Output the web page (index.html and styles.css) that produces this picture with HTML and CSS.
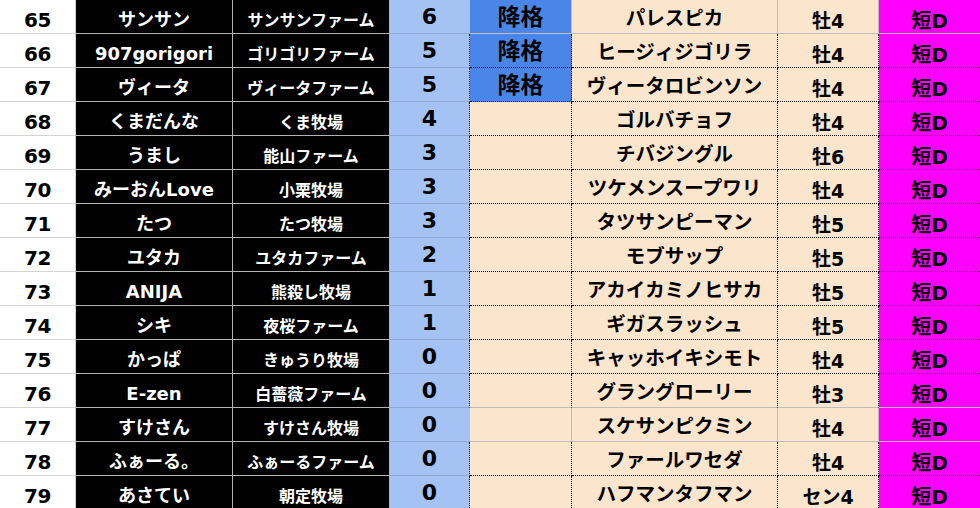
FILE: index.html
```html
<!DOCTYPE html>
<html lang="ja">
<head>
<meta charset="utf-8">
<link rel="stylesheet" href="styles.css">
</head>
<body>
<div class="sheet">
  <div class="row solid"><div class="cell c1">65</div><div class="cell c2">サンサン</div><div class="cell c3">サンサンファーム</div><div class="cell c4">6</div><div class="cell c5 demote">降格</div><div class="cell c6">パレスピカ</div><div class="cell c7">牡4</div><div class="cell c8">短D</div></div>
  <div class="row dot"><div class="cell c1">66</div><div class="cell c2">907gorigori</div><div class="cell c3">ゴリゴリファーム</div><div class="cell c4">5</div><div class="cell c5 demote">降格</div><div class="cell c6">ヒージィジゴリラ</div><div class="cell c7">牡4</div><div class="cell c8">短D</div></div>
  <div class="row dot"><div class="cell c1">67</div><div class="cell c2">ヴィータ</div><div class="cell c3">ヴィータファーム</div><div class="cell c4">5</div><div class="cell c5 demote">降格</div><div class="cell c6">ヴィータロビンソン</div><div class="cell c7">牡4</div><div class="cell c8">短D</div></div>
  <div class="row dot"><div class="cell c1">68</div><div class="cell c2">くまだんな</div><div class="cell c3">くま牧場</div><div class="cell c4">4</div><div class="cell c5"></div><div class="cell c6">ゴルバチョフ</div><div class="cell c7">牡4</div><div class="cell c8">短D</div></div>
  <div class="row dot"><div class="cell c1">69</div><div class="cell c2">うまし</div><div class="cell c3">能山ファーム</div><div class="cell c4">3</div><div class="cell c5"></div><div class="cell c6">チバジングル</div><div class="cell c7">牡6</div><div class="cell c8">短D</div></div>
  <div class="row dot"><div class="cell c1">70</div><div class="cell c2">みーおんLove</div><div class="cell c3">小栗牧場</div><div class="cell c4">3</div><div class="cell c5"></div><div class="cell c6">ツケメンスープワリ</div><div class="cell c7">牡4</div><div class="cell c8">短D</div></div>
  <div class="row dot"><div class="cell c1">71</div><div class="cell c2">たつ</div><div class="cell c3">たつ牧場</div><div class="cell c4">3</div><div class="cell c5"></div><div class="cell c6">タツサンピーマン</div><div class="cell c7">牡5</div><div class="cell c8">短D</div></div>
  <div class="row dot"><div class="cell c1">72</div><div class="cell c2">ユタカ</div><div class="cell c3">ユタカファーム</div><div class="cell c4">2</div><div class="cell c5"></div><div class="cell c6">モブサップ</div><div class="cell c7">牡5</div><div class="cell c8">短D</div></div>
  <div class="row dot"><div class="cell c1">73</div><div class="cell c2">ANIJA</div><div class="cell c3">熊殺し牧場</div><div class="cell c4">1</div><div class="cell c5"></div><div class="cell c6">アカイカミノヒサカ</div><div class="cell c7">牡5</div><div class="cell c8">短D</div></div>
  <div class="row dot"><div class="cell c1">74</div><div class="cell c2">シキ</div><div class="cell c3">夜桜ファーム</div><div class="cell c4">1</div><div class="cell c5"></div><div class="cell c6">ギガスラッシュ</div><div class="cell c7">牡5</div><div class="cell c8">短D</div></div>
  <div class="row dot"><div class="cell c1">75</div><div class="cell c2">かっぱ</div><div class="cell c3">きゅうり牧場</div><div class="cell c4">0</div><div class="cell c5"></div><div class="cell c6">キャッホイキシモト</div><div class="cell c7">牡4</div><div class="cell c8">短D</div></div>
  <div class="row dot last"><div class="cell c1">76</div><div class="cell c2">E-zen</div><div class="cell c3">白薔薇ファーム</div><div class="cell c4">0</div><div class="cell c5"></div><div class="cell c6">グラングローリー</div><div class="cell c7">牡3</div><div class="cell c8">短D</div></div>
  <div class="row solid"><div class="cell c1">77</div><div class="cell c2">すけさん</div><div class="cell c3">すけさん牧場</div><div class="cell c4">0</div><div class="cell c5"></div><div class="cell c6">スケサンピクミン</div><div class="cell c7">牡4</div><div class="cell c8">短D</div></div>
  <div class="row dot"><div class="cell c1">78</div><div class="cell c2">ふぁーる。</div><div class="cell c3">ふぁーるファーム</div><div class="cell c4">0</div><div class="cell c5"></div><div class="cell c6">ファールワセダ</div><div class="cell c7">牡4</div><div class="cell c8">短D</div></div>
  <div class="row dot"><div class="cell c1">79</div><div class="cell c2">あさてい</div><div class="cell c3">朝定牧場</div><div class="cell c4">0</div><div class="cell c5"></div><div class="cell c6">ハフマンタフマン</div><div class="cell c7">セン4</div><div class="cell c8">短D</div></div>
</div>
</body>
</html>
```

FILE: styles.css
```css
html, body {
  margin: 0;
  padding: 0;
  background: #ffffff;
}
body {
  font-family: "DejaVu Sans", "Noto Sans CJK JP", sans-serif;
  font-weight: 700;
  color: #000;
}
.sheet {
  width: 980px;
  height: 508px;
  overflow: hidden;
}
.row {
  display: grid;
  grid-template-columns: 76px 157px 157px 80px 102px 206px 101px 101px;
  height: 34px;
}
.cell {
  box-sizing: border-box;
  border-right: 1px solid #bdbdbd;
  border-bottom: 1px solid #bdbdbd;
  display: flex;
  align-items: center;
  justify-content: center;
  white-space: nowrap;
  line-height: 1;
  overflow: hidden;
}
.c1 {
  background: #ffffff;
  border-color: #d4d4d4;
  font-size: 20px;
  padding-top: 7px;
  letter-spacing: -0.5px;
}
.c2 {
  background: #000;
  color: #fff;
  border-color: #b4b4b4;
  font-size: 18px;
  padding-top: 6px;
}
.c3 {
  background: #000;
  color: #fff;
  border-color: #b4b4b4;
  font-size: 16px;
  padding-top: 8px;
}
.c4 {
  background: #a4c2f4;
  border-bottom-color: #8fa9d3;
  border-right-color: #bdbdbd;
  font-size: 22px;
  padding-top: 1px;
}
.c5 {
  background: #fce5cd;
  font-size: 23px;
  padding-top: 2px;
}
.c5.demote {
  background: #4a86e8;
}
.c6 {
  background: #fce5cd;
  font-size: 19.5px;
  padding-top: 4px;
}
.c7 {
  background: #fce5cd;
  font-size: 19px;
  padding-top: 9px;
}
.c8 {
  background: #ff00ff;
  font-size: 20px;
  padding-top: 9px;
  border-right: 0;
}
.dot .c4,
.dot .c5,
.dot .c6,
.dot .c7 {
  border-right: 1px dotted #000;
}
.dot .c5,
.dot .c6,
.dot .c7,
.dot .c8 {
  border-bottom: 1px dotted #000;
}
.dot.last .c5,
.dot.last .c6,
.dot.last .c7,
.dot.last .c8 {
  border-bottom: 1px solid #bdbdbd;
}
.c8 {
  border-right: 0;
}
```
